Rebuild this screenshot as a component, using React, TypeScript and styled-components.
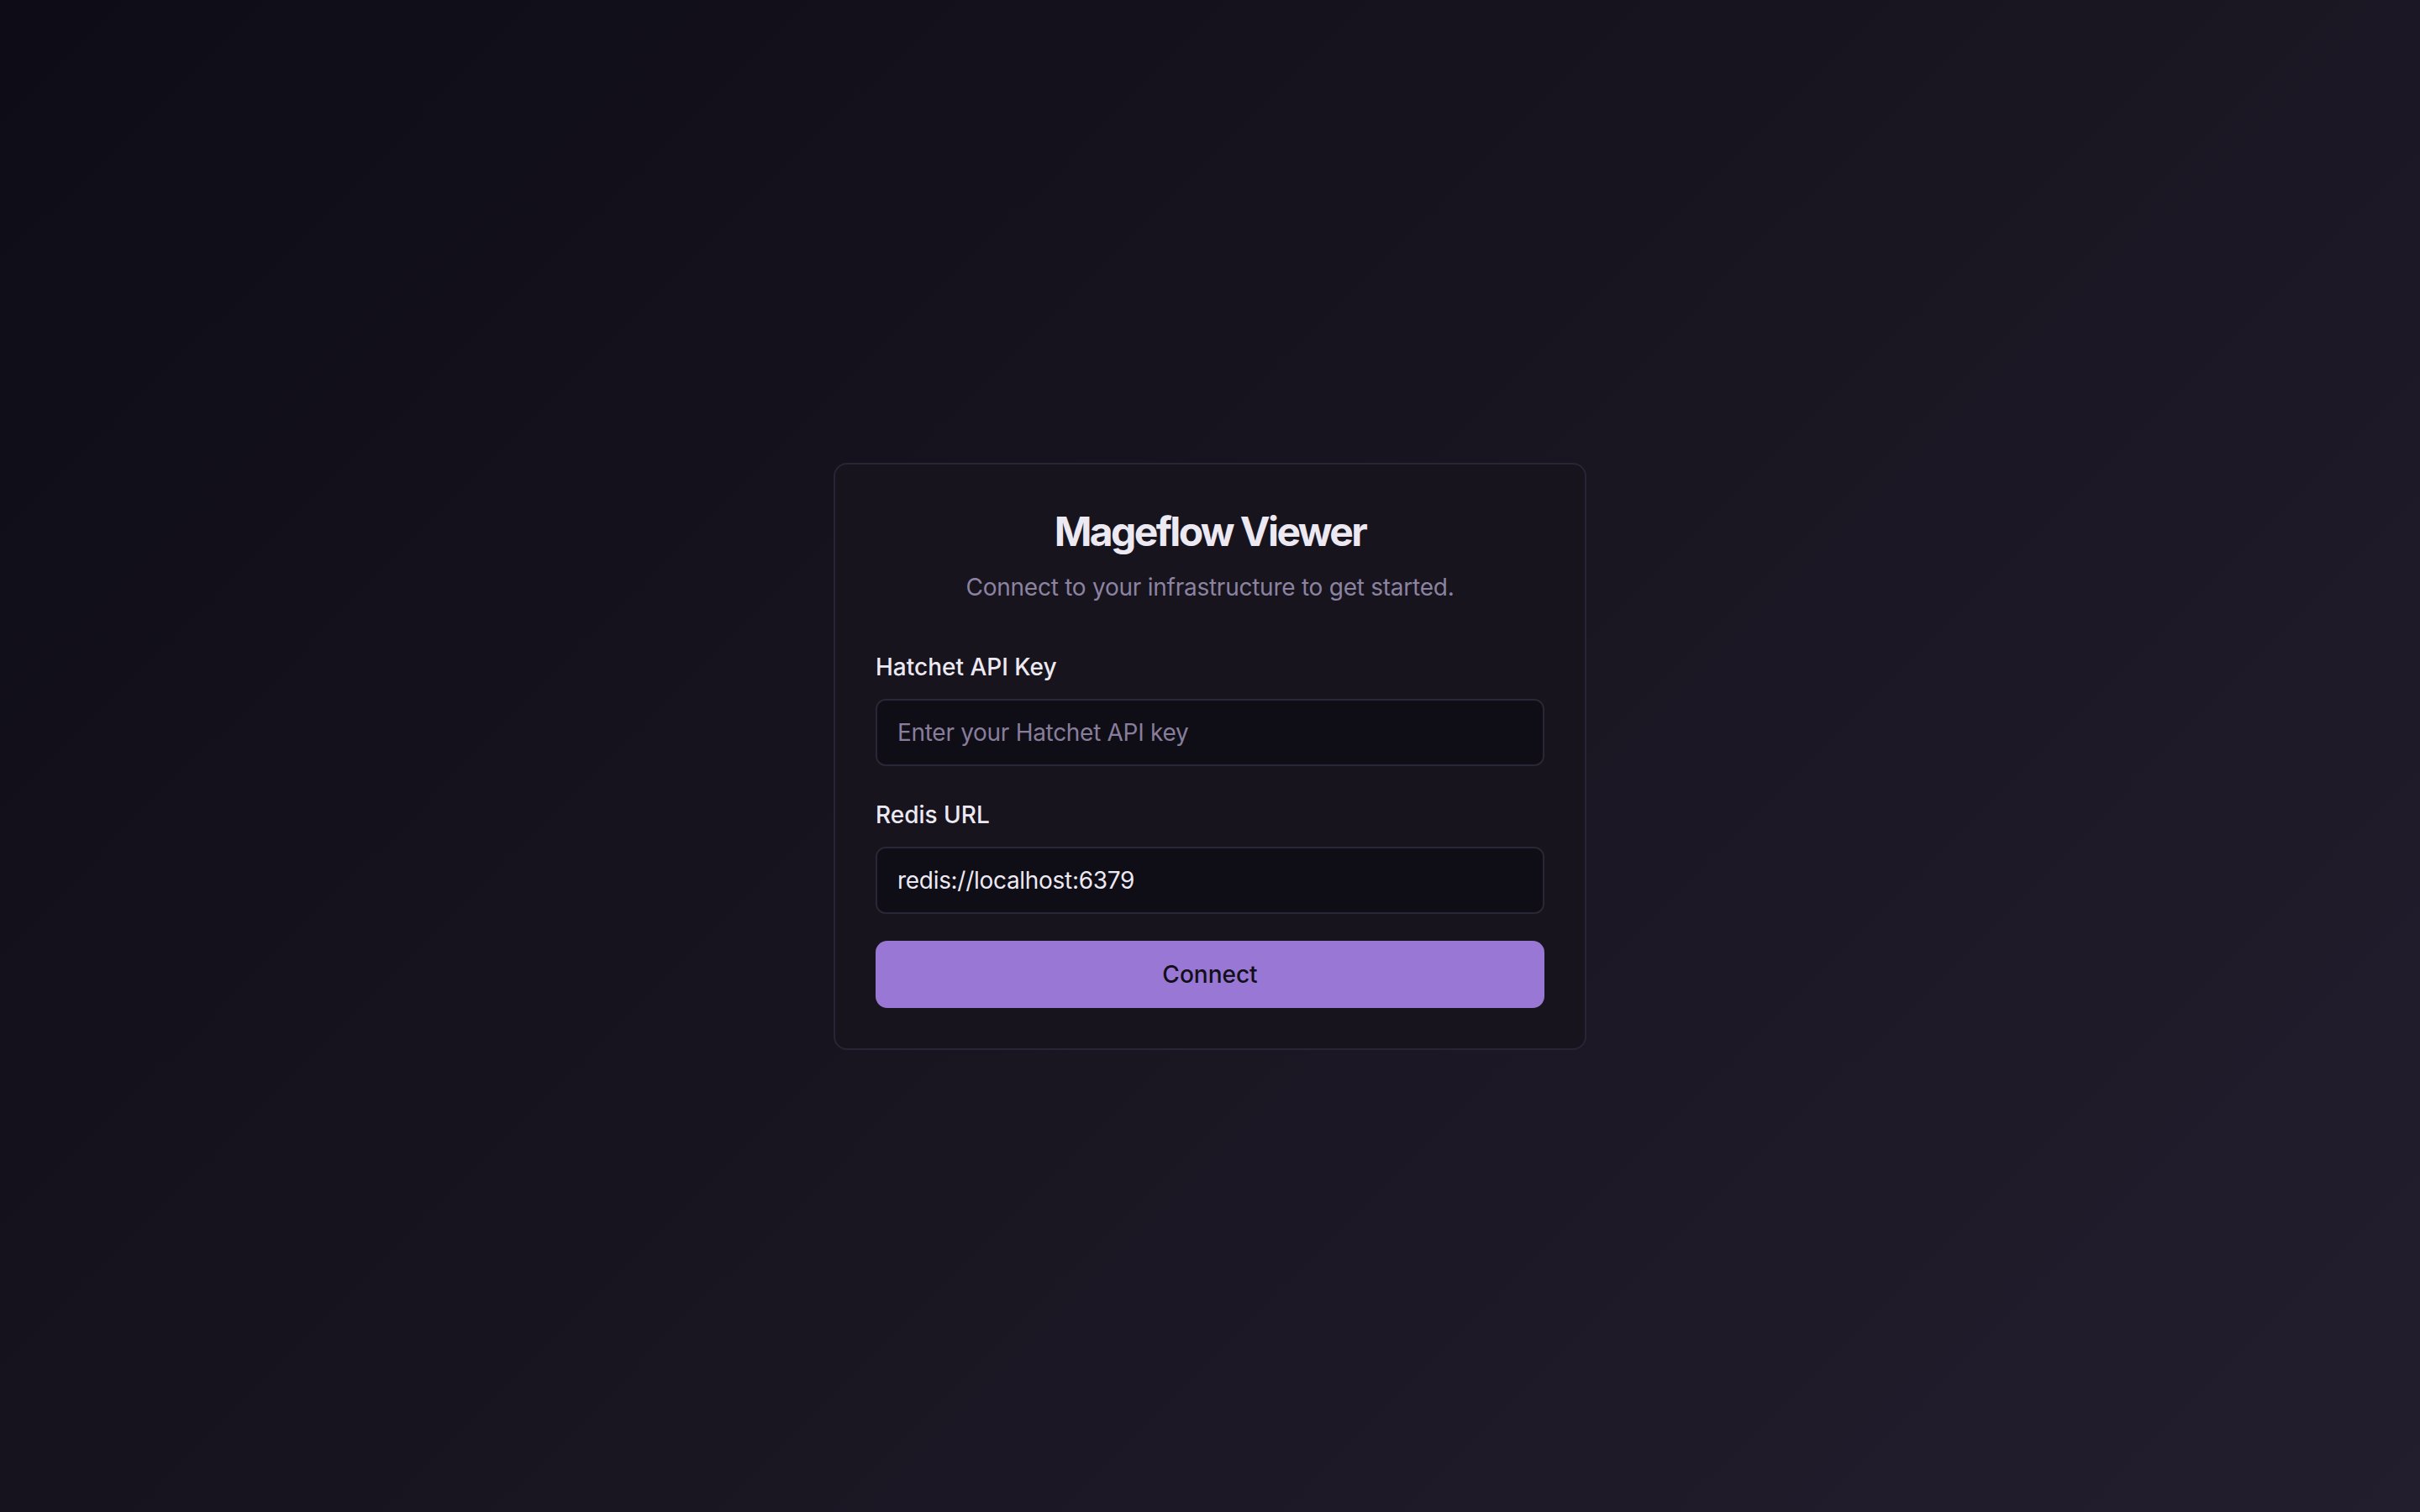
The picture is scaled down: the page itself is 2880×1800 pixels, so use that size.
import React from 'react';
import styled, { createGlobalStyle } from 'styled-components';

const GlobalStyle = createGlobalStyle`
  html, body {
    margin: 0;
    padding: 0;
    height: 100%;
  }

  body {
    font-family: Inter, 'Noto Sans', sans-serif;
    background: #0f0d17;
  }

  #root {
    height: 100%;
  }

  * {
    box-sizing: border-box;
  }
`;

const Screen = styled.div`
  width: 100%;
  min-height: 100vh;
  display: flex;
  align-items: center;
  justify-content: center;
  background: linear-gradient(135deg, #0e0c16 0%, #17141f 45%, #231e2e 100%);
`;

const Card = styled.form`
  width: 896px;
  display: flex;
  flex-direction: column;
  padding: 48px;
  background-color: #17141e;
  border: 2px solid #292535;
  border-radius: 16px;
`;

const Header = styled.div`
  display: flex;
  flex-direction: column;
  align-items: center;
  gap: 14px;
  margin-bottom: 55px;
`;

const Title = styled.h1`
  margin: 0;
  font-size: 48px;
  line-height: 64px;
  font-weight: 700;
  letter-spacing: -2.6px;
  color: #ece9f2;
`;

const Subtitle = styled.p`
  margin: 0;
  font-size: 28px;
  line-height: 40px;
  letter-spacing: -0.25px;
  color: #8c83a1;
`;

const Field = styled.div`
  display: flex;
  flex-direction: column;
  gap: 18px;
  margin-bottom: ${(p: { last?: boolean }) => (p.last ? '32px' : '38px')};
`;

const Label = styled.label`
  font-size: 28px;
  line-height: 40px;
  font-weight: 500;
  color: #ece9f2;
`;

const Input = styled.input`
  width: 100%;
  height: 80px;
  padding: 0 24px;
  font-family: inherit;
  font-size: 28px;
  letter-spacing: -0.3px;
  color: #ece9f2;
  background-color: #0f0d16;
  border: 2px solid #2a2636;
  border-radius: 12px;
  outline: none;

  &::placeholder {
    color: #887e9b;
  }
`;

const Button = styled.button`
  width: 100%;
  height: 80px;
  font-family: inherit;
  font-size: 28px;
  font-weight: 500;
  color: #120f18;
  background-color: #9878d4;
  border: none;
  border-radius: 14px;
  cursor: pointer;
`;

const App = (): JSX.Element => {
  return (
    <>
      <GlobalStyle />
      <Screen>
        <Card onSubmit={(e) => e.preventDefault()}>
          <Header>
            <Title>Mageflow Viewer</Title>
            <Subtitle>Connect to your infrastructure to get started.</Subtitle>
          </Header>
          <Field>
            <Label htmlFor='api-key'>Hatchet API Key</Label>
            <Input id='api-key' type='password' placeholder='Enter your Hatchet API key' />
          </Field>
          <Field last>
            <Label htmlFor='redis-url'>Redis URL</Label>
            <Input id='redis-url' type='text' defaultValue='redis://localhost:6379' />
          </Field>
          <Button type='submit'>Connect</Button>
        </Card>
      </Screen>
    </>
  );
};

export default App;
